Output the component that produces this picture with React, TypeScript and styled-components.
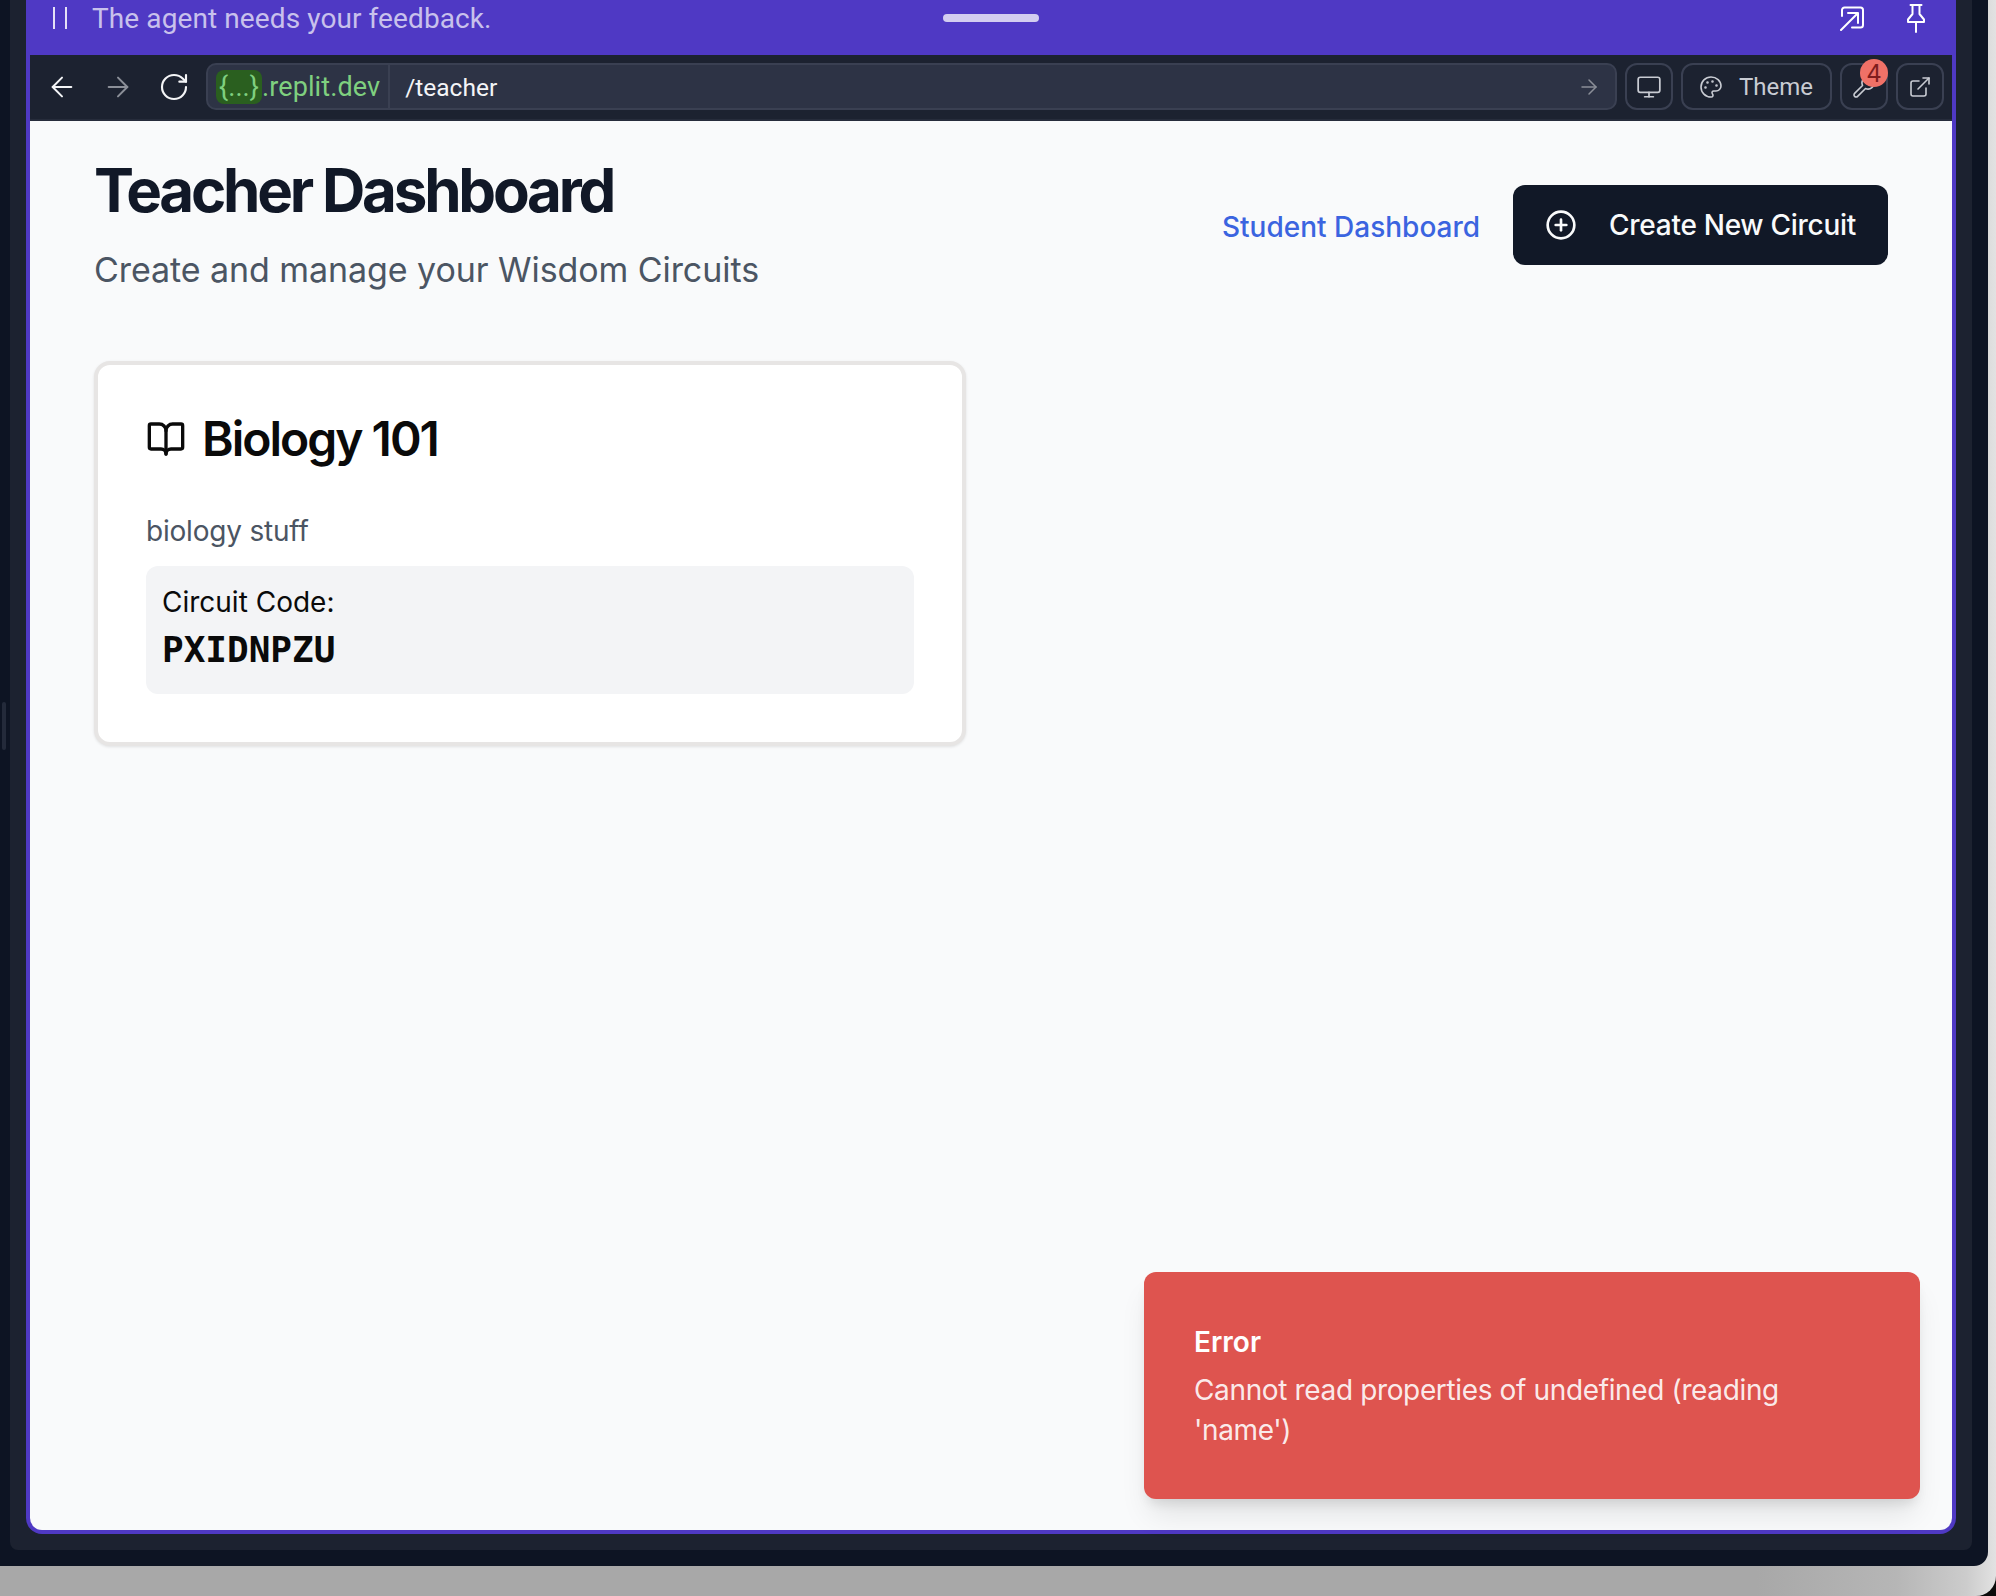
import React from "react";
import styled, { createGlobalStyle } from "styled-components";
import {
  ArrowLeft,
  ArrowRight,
  BookOpen,
  CirclePlus,
  ExternalLink,
  Monitor,
  Palette,
  RotateCw,
  Wrench,
} from "lucide-react";

const GlobalStyle = createGlobalStyle`
  html, body {
    margin: 0;
    padding: 0;
    background: #0b0b0b;
  }
  * {
    box-sizing: border-box;
  }
`;

const App = () => {
  return (
    <Page>
      <GlobalStyle />
      <Shell>
        <SideGrip />
        <Panel>
          <Frame>
            <AgentBar>
              <AgentStatus>
                <PauseBars>
                  <span />
                  <span />
                </PauseBars>
                The agent needs your feedback.
              </AgentStatus>
              <DragHandle />
              <AgentActions>
                <svg width="26" height="26" viewBox="0 0 26 26" fill="none" stroke="#fff" strokeWidth="2" strokeLinecap="round" strokeLinejoin="round">
                  <path d="M3 11V5a2.5 2.5 0 0 1 2.5-2.5h16A2.5 2.5 0 0 1 24 5v15a2.5 2.5 0 0 1-2.5 2.5H13" />
                  <path d="M2 25L18 9" />
                  <path d="M9 8h10v10" />
                </svg>
                <svg width="20" height="30" viewBox="0 0 20 30" fill="none" stroke="#fff" strokeWidth="2" strokeLinecap="round" strokeLinejoin="round">
                  <path d="M4.5 2h11" />
                  <path d="M6.5 2v9L2 16.5V19h16v-2.5L13.5 11V2" />
                  <path d="M10 19v10" />
                </svg>
              </AgentActions>
            </AgentBar>
            <Toolbar>
              <NavIcons>
                <ArrowLeft size={32} color="#f4f5f7" strokeWidth={1.5} />
                <ArrowRight size={32} color="#8b8f98" strokeWidth={1.5} />
                <RotateCw size={32} color="#f4f5f7" strokeWidth={1.6} />
              </NavIcons>
              <UrlBar>
                <Domain>
                  <DomainChip>{"{...}"}</DomainChip>.replit.dev
                </Domain>
                <UrlPath>/teacher</UrlPath>
                <ArrowRight size={24} color="#8b8f98" strokeWidth={1.5} />
              </UrlBar>
              <ToolButton>
                <Monitor size={26} strokeWidth={1.6} />
              </ToolButton>
              <ToolButton $wide>
                <Palette size={24} strokeWidth={1.6} />
                <span>Theme</span>
              </ToolButton>
              <ToolButton>
                <Wrench size={24} strokeWidth={1.6} />
                <Badge>4</Badge>
              </ToolButton>
              <ToolButton>
                <ExternalLink size={24} strokeWidth={1.6} />
              </ToolButton>
            </Toolbar>
            <Content>
              <Header>
                <div>
                  <Title>Teacher Dashboard</Title>
                  <Subtitle>Create and manage your Wisdom Circuits</Subtitle>
                </div>
                <HeaderActions>
                  <StudentLink>Student Dashboard</StudentLink>
                  <CreateButton>
                    <CirclePlus size={32} strokeWidth={2} />
                    Create New Circuit
                  </CreateButton>
                </HeaderActions>
              </Header>
              <CardGrid>
                <Card>
                  <CardTitle>
                    <BookOpen size={40} strokeWidth={2} />
                    Biology 101
                  </CardTitle>
                  <CardText>biology stuff</CardText>
                  <CodeBox>
                    <CodeLabel>Circuit Code:</CodeLabel>
                    <CodeValue>PXIDNPZU</CodeValue>
                  </CodeBox>
                </Card>
              </CardGrid>
              <Toast>
                <ToastTitle>Error</ToastTitle>
                <ToastText>Cannot read properties of undefined (reading 'name')</ToastText>
              </Toast>
            </Content>
          </Frame>
        </Panel>
      </Shell>
    </Page>
  );
};

export default App;

const Page = styled.div`
  width: 1996px;
  height: 1596px;
  overflow: hidden;
  border-radius: 0 0 20px 0;
  background: linear-gradient(90deg, #a8a8a8 0%, #a8a8a8 88%, #b6b6b6 95%, #cccccc 98.5%, #e2e2e2 100%);
`;

const Shell = styled.div`
  position: relative;
  width: 1988px;
  height: 1566px;
  padding: 0 16px 16px 10px;
  background: #0d1423;
  border-radius: 0 0 14px 0;
`;

const SideGrip = styled.div`
  position: absolute;
  left: 2px;
  top: 702px;
  width: 4px;
  height: 48px;
  border-radius: 2px;
  background: #232a3a;
`;

const Panel = styled.div`
  height: 100%;
  padding: 0 16px 16px;
  background: #1c2230;
  border-radius: 0 0 8px 8px;
`;

const Frame = styled.div`
  display: flex;
  flex-direction: column;
  height: 100%;
  background: #4f39c4;
  border-radius: 0 0 16px 16px;
  padding: 0 4px 4px;
`;

const AgentBar = styled.div`
  display: grid;
  grid-template-columns: 1fr auto 1fr;
  align-items: start;
  flex: 0 0 55px;
  margin: 0 -4px;
`;

const AgentStatus = styled.div`
  display: flex;
  align-items: center;
  gap: 25px;
  height: 36px;
  padding-left: 27px;
  font-family: "Roboto", "Liberation Sans", sans-serif;
  font-size: 28px;
  letter-spacing: 0.1px;
  color: rgba(255, 255, 255, 0.7);
`;

const PauseBars = styled.div`
  display: flex;
  gap: 10px;

  span {
    width: 2px;
    height: 22px;
    background: rgba(255, 255, 255, 0.85);
  }
`;

const DragHandle = styled.div`
  width: 96px;
  height: 8px;
  margin-top: 14px;
  border-radius: 4px;
  background: rgba(255, 255, 255, 0.75);
`;

const AgentActions = styled.div`
  display: flex;
  justify-content: flex-end;
  align-items: center;
  gap: 41px;
  height: 36px;
  padding-right: 30px;
`;

const Toolbar = styled.div`
  display: flex;
  align-items: center;
  flex: 0 0 66px;
  gap: 8px;
  padding: 0 8px 1px 16px;
  background: #1c2230;
  border-bottom: 2px solid #262c3b;
`;

const NavIcons = styled.div`
  display: flex;
  align-items: center;
  gap: 24px;
  margin-right: 8px;
`;

const UrlBar = styled.div`
  display: flex;
  align-items: center;
  flex: 1;
  height: 47px;
  padding-right: 14px;
  background: #2d3345;
  border: 2px solid #3a4052;
  border-radius: 10px;
  font-family: "Roboto", "Liberation Sans", sans-serif;
`;

const Domain = styled.div`
  display: flex;
  align-items: center;
  height: 100%;
  padding: 0 8px;
  border-right: 2px solid #3a4052;
  color: #7fd07f;
  font-size: 27px;
  letter-spacing: 0.1px;
`;

const DomainChip = styled.span`
  display: inline-flex;
  align-items: center;
  justify-content: center;
  height: 34px;
  width: 46px;
  background: #2a5f1f;
  border-radius: 8px;
`;

const UrlPath = styled.div`
  flex: 1;
  padding: 2px 0 0 15px;
  color: #f4f5f7;
  font-size: 24.5px;
`;

const ToolButton = styled.div<{ $wide?: boolean }>`
  position: relative;
  display: flex;
  align-items: center;
  justify-content: ${(p) => (p.$wide ? "flex-start" : "center")};
  gap: 16px;
  flex: 0 0 ${(p) => (p.$wide ? "151px" : "48px")};
  height: 47px;
  padding-left: ${(p) => (p.$wide ? "16px" : "0")};
  border: 2px solid #3a4052;
  border-radius: 12px;
  color: #c9ccd3;
  font-family: "Roboto", "Liberation Sans", sans-serif;
  font-size: 24px;
`;

const Badge = styled.span`
  position: absolute;
  top: -6px;
  right: -2px;
  display: flex;
  align-items: center;
  justify-content: center;
  width: 28px;
  height: 28px;
  border-radius: 50%;
  background: #f07167;
  color: #7f1d1d;
  font-family: "Inter", "Liberation Sans", sans-serif;
  font-size: 24px;
`;

const Content = styled.div`
  position: relative;
  flex: 1;
  padding: 33px 64px 0;
  background: #f9fafb;
  border-radius: 0 0 12px 12px;
  font-family: "Inter", "Liberation Sans", sans-serif;
`;

const Header = styled.div`
  display: flex;
  justify-content: space-between;
  align-items: flex-start;
`;

const Title = styled.h1`
  margin: 0;
  font-size: 60px;
  line-height: 72px;
  font-weight: 700;
  letter-spacing: -3.2px;
  color: #111827;
`;

const Subtitle = styled.p`
  margin: 22px 0 0;
  font-size: 34px;
  line-height: 44px;
  letter-spacing: -0.07px;
  color: #4b5563;
`;

const HeaderActions = styled.div`
  display: flex;
  align-items: center;
  gap: 33px;
  margin-top: 31px;
`;

const StudentLink = styled.a`
  margin-top: 3px;
  font-size: 28px;
  font-weight: 500;
  color: #3b64e0;
`;

const CreateButton = styled.button`
  display: flex;
  align-items: center;
  gap: 32px;
  height: 80px;
  padding: 0 32px;
  border: 0;
  border-radius: 12px;
  background: #111827;
  color: #f9fafb;
  font-family: inherit;
  font-size: 28px;
  font-weight: 500;
  letter-spacing: -0.28px;
`;

const CardGrid = styled.div`
  display: grid;
  grid-template-columns: 872px;
  margin-top: 69px;
`;

const Card = styled.div`
  padding: 50px 48px 48px;
  background: #fff;
  border: 4px solid #e7e5e4;
  border-radius: 16px;
  box-shadow: 0 1px 3px rgba(0, 0, 0, 0.1);
`;

const CardTitle = styled.h3`
  display: flex;
  align-items: center;
  gap: 16px;
  margin: 0;
  font-size: 48px;
  line-height: 48px;
  font-weight: 600;
  letter-spacing: -2px;
  color: #0a0a0a;
`;

const CardText = styled.p`
  margin: 48px 0 0;
  font-size: 28px;
  line-height: 40px;
  letter-spacing: -0.2px;
  color: #4b5563;
`;

const CodeBox = styled.div`
  margin-top: 15px;
  padding: 16px 16px 20px;
  background: #f3f4f6;
  border-radius: 12px;
`;

const CodeLabel = styled.div`
  font-size: 28px;
  line-height: 40px;
  color: #0a0a0a;
`;

const CodeValue = styled.div`
  margin-top: 4px;
  font-family: "DejaVu Sans Mono", "Liberation Mono", monospace;
  font-size: 36px;
  line-height: 48px;
  font-weight: 700;
  color: #0a0a0a;
`;

const Toast = styled.div`
  position: absolute;
  right: 32px;
  bottom: 31px;
  width: 776px;
  height: 227px;
  padding: 50px;
  background: #de544f;
  border-radius: 12px;
  color: #fff;
  box-shadow: 0 20px 30px -6px rgba(0, 0, 0, 0.1), 0 8px 12px -4px rgba(0, 0, 0, 0.1);
`;

const ToastTitle = styled.div`
  font-size: 28px;
  line-height: 40px;
  font-weight: 600;
`;

const ToastText = styled.div`
  margin-top: 8px;
  font-size: 28px;
  line-height: 40px;
  letter-spacing: -0.36px;
  color: rgba(255, 255, 255, 0.9);
`;
